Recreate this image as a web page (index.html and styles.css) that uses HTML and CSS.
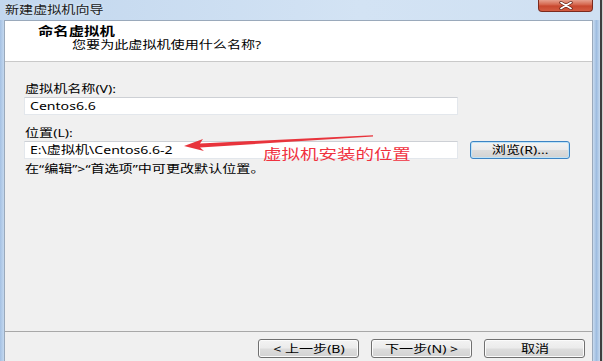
FILE: index.html
```html
<!DOCTYPE html>
<html lang="zh-CN">
<head>
<meta charset="utf-8">
<title>新建虚拟机向导</title>
<link rel="stylesheet" href="styles.css">
</head>
<body>
<div class="window">
  <div class="win">
    <div class="titlebar">
      <span class="sx title-text">新建虚拟机向导</span>
      <div class="close">
        <svg width="16" height="9" viewBox="0 0 16 9"><path d="M3 1.5 L13 7.5 M13 1.5 L3 7.5" stroke="#5a1a10" stroke-width="3.2" stroke-linecap="round"/><path d="M3 1.5 L13 7.5 M13 1.5 L3 7.5" stroke="#fff" stroke-width="1.8" stroke-linecap="round"/></svg>
      </div>
    </div>
    <div class="row">
      <div class="frame-l"></div>
      <div class="client">
        <div class="header">
          <div class="h-title"><span class="sx">命名虚拟机</span></div>
          <div class="h-sub"><span class="sx">您要为此虚拟机使用什么名称?</span></div>
        </div>
        <div class="form">
          <div class="label"><span class="sx">虚拟机名称(V):</span></div>
          <div class="input"><span class="sx">Centos6.6</span></div>
          <div class="label label2"><span class="sx">位置(L):</span></div>
          <div class="loc-row">
            <div class="input"><span class="sx">E:\虚拟机\Centos6.6-2</span></div>
            <div class="btn btn-browse"><span class="sx sx-c">浏览(R)...</span></div>
          </div>
          <div class="hint"><span class="sx">在“编辑”&gt;“首选项”中可更改默认位置。</span></div>
        </div>
        <div class="footer">
          <div class="btn"><span class="sx sx-c">&lt; 上一步(B)</span></div>
          <div class="btn"><span class="sx sx-c">下一步(N) &gt;</span></div>
          <div class="btn"><span class="sx sx-c">取消</span></div>
        </div>
      </div>
      <div class="frame-r"></div>
    </div>
  </div>
  <div class="edge"></div>
  <svg class="arrow" width="200" height="26" viewBox="0 0 200 26"><polygon points="4,16 23,9 20,13.5 193,5.3 193,6.4 20,17.5 24,21" fill="#e8343c"/></svg>
  <div class="note"><span class="sx">虚拟机安装的位置</span></div>
</div>
</body>
</html>
```

FILE: styles.css
```css
html, body {
  margin: 0;
  padding: 0;
  width: 603px;
  height: 361px;
  overflow: hidden;
  background: #f0f0f0;
}

body {
  font-family: "Noto Sans", "Noto Sans CJK SC", sans-serif;
  font-size: 11px;
  color: #000;
}

.window {
  position: relative;
  display: flex;
  width: 603px;
  height: 361px;
  overflow: hidden;
}

.win {
  flex: 1;
  display: flex;
  flex-direction: column;
}

.edge {
  width: 3px;
  background: linear-gradient(to right, #3e3e3e 0 2px, #cfcfcf 2px);
}

.sx {
  display: inline-block;
  white-space: nowrap;
  transform: scaleX(1.28);
  transform-origin: 0 50%;
}

.sx-c {
  transform-origin: 50% 50%;
}

.titlebar {
  height: 20px;
  display: flex;
  align-items: flex-start;
  background: linear-gradient(to right, #c2d7ee, #d3e3f4 60%, #cfe0f2);
  padding-left: 5px;
}

.title-text {
  line-height: 20px;
  color: #1a1a1a;
  text-shadow: 0 0 3px #e6f0fa;
}

.close {
  margin-left: auto;
  margin-right: 7px;
  width: 55px;
  height: 12px;
  box-sizing: border-box;
  border: 1px solid #7c2a1d;
  border-top: none;
  border-radius: 0 0 4px 4px;
  background: linear-gradient(#e6a08e, #d66a52 40%, #c8482f 55%, #d35c42 100%);
  display: flex;
  align-items: center;
  justify-content: center;
}

.row {
  flex: 1;
  display: flex;
}

.frame-l {
  width: 4px;
  background: linear-gradient(to right, #a5c1e3, #c3d8ef);
}

.frame-r {
  width: 7px;
  background: linear-gradient(to right, #c9dcf0, #9fbde0 50%, #c6daf0);
}

.client {
  flex: 1;
  display: flex;
  flex-direction: column;
  border: 1px solid #9aa9bb;
  border-bottom: none;
  background: #f0f0f0;
}

.header {
  height: 36px;
  background: #fff;
  border-bottom: 1px solid #c9c9c9;
  padding: 4px 0 0 33px;
}

.h-title {
  font-size: 12px;
  font-weight: bold;
  line-height: 13px;
}

.h-sub {
  line-height: 13px;
  padding-left: 34px;
}

.form {
  height: 269px;
  box-sizing: border-box;
  padding: 20px 0 0 19px;
}

.label {
  line-height: 14px;
  padding-left: 1px;
}

.label2 {
  margin-top: 11px;
}

.input {
  width: 434px;
  height: 18px;
  box-sizing: border-box;
  margin-top: 1px;
  background: #fff;
  border: 1px solid #e3e7ec;
  border-top-color: #cdd0d5;
  padding-left: 5px;
  line-height: 16px;
}

.loc-row {
  display: flex;
  align-items: flex-start;
}

.btn {
  width: 101px;
  height: 19px;
  box-sizing: border-box;
  border: 1px solid #707070;
  border-radius: 3px;
  background: linear-gradient(#f3f3f3, #ebebeb 48%, #dddddd 52%, #d2d2d2);
  box-shadow: inset 0 0 0 1px #fbfbfb;
  display: flex;
  align-items: center;
  justify-content: center;
  line-height: 16px;
}

.btn-browse {
  width: 100px;
  margin-left: 12px;
  margin-top: 1px;
  height: 18px;
  border-color: #3c84c4;
  box-shadow: inset 0 0 0 1px #bfe3f7;
}

.hint {
  margin-top: 3px;
  line-height: 14px;
  padding-left: 1px;
}

.footer {
  border-top: 1px solid #a8a8a8;
  display: flex;
  justify-content: flex-end;
  gap: 12px;
  padding: 7px 7px 0 0;
  flex: 1;
}

.arrow {
  position: absolute;
  left: 180px;
  top: 130px;
}

.note {
  position: absolute;
  left: 263px;
  top: 146px;
  font-size: 14px;
  line-height: 16px;
  color: #f0323f;
}

.note .sx {
  transform: scaleX(1.32);
}
```
